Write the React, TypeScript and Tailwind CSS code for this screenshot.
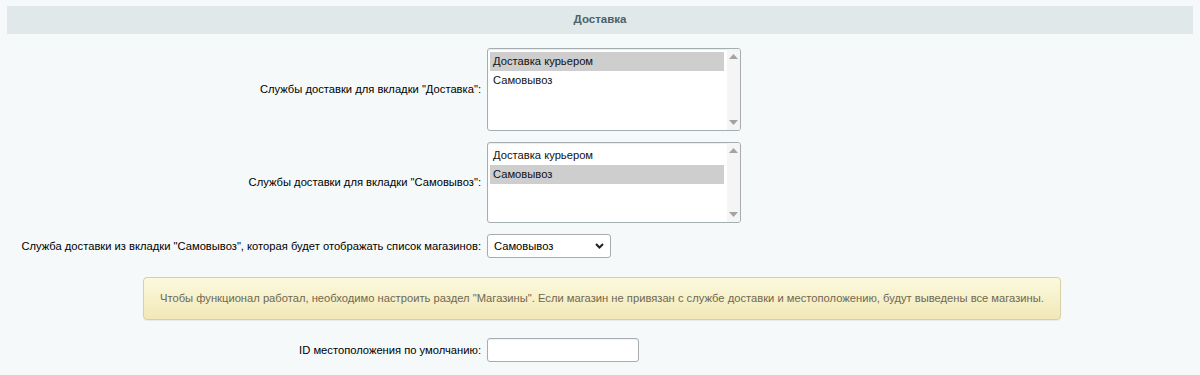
const font = "font-['Liberation_Sans',Arial,sans-serif]";

function ScrollTrack() {
    return (
        <div className="flex w-[13px] flex-col items-center justify-between bg-[#f5f5f5] py-[5px]">
            <svg width="9" height="5" viewBox="0 0 9 5"><path d="M4.5 0 L9 5 L0 5 Z" fill="#a3a3a3" /></svg>
            <svg width="9" height="5" viewBox="0 0 9 5"><path d="M0 0 L9 0 L4.5 5 Z" fill="#a3a3a3" /></svg>
        </div>
    );
}

function ListBox({ options, selected, height }: { options: string[]; selected: number; height: string }) {
    return (
        <div className={`flex w-[254px] ${height} overflow-hidden rounded-[3px] border border-[#a6adb1] bg-white shadow-[inset_0_1px_1px_rgba(0,0,0,0.08)]`}>
            <div className="flex-1 pl-[2px] pr-[3px] pt-[3px]">
                {options.map((o, i) => (
                    <div
                        key={o}
                        className={`h-[19px] pl-[3px] text-[11.2px] leading-[19px] text-[#111] ${i === selected ? "bg-[#cecece]" : ""}`}
                    >
                        {o}
                    </div>
                ))}
            </div>
            <ScrollTrack />
        </div>
    );
}

function Row({ label, children }: { label: string; children: React.ReactNode }) {
    return (
        <div className="flex items-center">
            <div className="w-[474px] shrink-0 text-right text-[11.2px] text-black">{label}</div>
            <div className="ml-[6px]">{children}</div>
        </div>
    );
}

export default function App() {
    const services = ["Доставка курьером", "Самовывоз"];
    return (
        <div className={`min-h-[375px] bg-[#f5f9f9] px-[7px] pt-[6px] ${font}`}>
            <div className="flex h-[28px] items-center justify-center bg-[#e0e8ea] text-[11.5px] font-bold text-[#4b6267]">
                Доставка
            </div>

            <div className="mt-[14px] flex flex-col">
                <Row label={'Службы доставки для вкладки "Доставка":'}>
                    <ListBox options={services} selected={0} height="h-[83px]" />
                </Row>
                <div className="mt-[11px]">
                    <Row label={'Службы доставки для вкладки "Самовывоз":'}>
                        <ListBox options={services} selected={1} height="h-[81px]" />
                    </Row>
                </div>
                <div className="mt-[11px]">
                    <Row label={'Служба доставки из вкладки "Самовывоз", которая будет отображать список магазинов:'}>
                        <div className="flex h-[24px] w-[124px] items-center justify-between rounded-[3px] border border-[#a6adb1] bg-white pl-[6px] pr-[6px] text-[11.2px] text-black">
                            <span>Самовывоз</span>
                            <svg width="9" height="6" viewBox="0 0 9 6">
                                <path d="M1 1 L4.5 4.5 L8 1" fill="none" stroke="#222" strokeWidth="2" />
                            </svg>
                        </div>
                    </Row>
                </div>

                <div className="ml-[136px] mt-[19px] flex h-[43px] w-[918px] items-center rounded-[4px] border border-[#d9cfa5] bg-gradient-to-b from-[#fcf9dd] to-[#f1e8b8] pl-[16px] text-[11.2px] text-[#6f6850] shadow-[0_1px_1px_rgba(0,0,0,0.06)]">
                    Чтобы функционал работал, необходимо настроить раздел "Магазины". Если магазин не привязан с службе доставки и местоположению, будут выведены все магазины.
                </div>

                <div className="mt-[18px]">
                    <Row label="ID местоположения по умолчанию:">
                        <div className="h-[24px] w-[152px] rounded-[3px] border border-[#a6adb1] bg-white shadow-[inset_0_1px_1px_rgba(0,0,0,0.06)]" />
                    </Row>
                </div>
            </div>
        </div>
    );
}
